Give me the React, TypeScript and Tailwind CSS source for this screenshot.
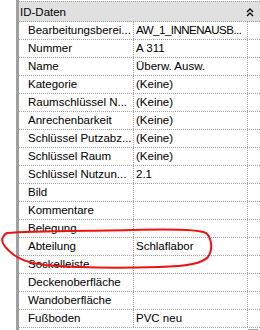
const rows: [string, string][] = [
  ["Bearbeitungsberei...", "AW_1_INNENAUSB..."],
  ["Nummer", "A 311"],
  ["Name", "Überw. Ausw."],
  ["Kategorie", "(Keine)"],
  ["Raumschlüssel N...", "(Keine)"],
  ["Anrechenbarkeit", "(Keine)"],
  ["Schlüssel Putzabz...", "(Keine)"],
  ["Schlüssel Raum", "(Keine)"],
  ["Schlüssel Nutzun...", "2.1"],
  ["Bild", ""],
  ["Kommentare", ""],
  ["Belegung", ""],
  ["Abteilung", "Schlaflabor"],
  ["Sockelleiste", ""],
  ["Deckenoberfläche", ""],
  ["Wandoberfläche", ""],
  ["Fußboden", "PVC neu"],
];

export default function App() {
  return (
    <div
      className="relative flex w-[260px] h-[330px] overflow-hidden bg-white text-black text-[11.5px]"
      style={{ fontFamily: '"Liberation Sans", Arial, sans-serif' }}
    >
      {/* left gutter + gray bar */}
      <div className="w-[16px] shrink-0" />
      <div className="w-[3px] shrink-0 bg-[#a0a0a0]" />

      <div className="flex flex-col w-[241px] pt-[1px]">
        {/* group header */}
        <div className="flex items-center h-[21px] bg-[#e0e0e0] border-t border-b border-dotted border-[#a0a0a0] pt-[2px]">
          <span className="flex-1 pl-[1px]">ID-Daten</span>
          <svg width="8" height="9" viewBox="0 0 8 9" className="mr-[6px] mb-[1px]">
            <path d="M1 4 L4 1 L7 4 M1 8 L4 5 L7 8" fill="none" stroke="#000" strokeWidth="1.3" />
          </svg>
        </div>

        {rows.map(([label, value], i) => (
          <div key={i} className="flex h-[18px] border-b border-dotted border-[#a0a0a0]">
            <div className="w-[115px] shrink-0 border-r border-dotted border-[#a0a0a0] pl-[9px] flex items-center whitespace-nowrap overflow-hidden">
              {label}
            </div>
            <div
              className={
                "w-[114px] shrink-0 border-r border-dotted border-[#a0a0a0] pl-[2px] flex items-center whitespace-nowrap overflow-hidden" +
                (i === 0 ? " tracking-[-0.5px]" : "")
              }
            >
              {value}
            </div>
            <div className="flex-1" />
          </div>
        ))}

        {/* scrollbar stub */}
        <div className="flex flex-1">
          <div className="w-[229px]" />
          <div className="w-[10px] h-[4px] mt-[1px] border border-[#a8a8a8] bg-[#f0f0f0]" />
        </div>
      </div>

      {/* hand-drawn red marker */}
      <svg className="absolute left-0 top-0 pointer-events-none" width="260" height="330">
        <path
          d="M7 233 C 30 231, 90 231, 133 230 C 170 229, 198 229, 206 233 C 212 238, 213 250, 208 257 C 202 264, 185 266, 160 267 C 130 268, 80 268, 45 265 C 25 262, 20 259, 14 255 C 6 249, 0 242, 3 237 C 4 235, 5 234, 7 233"
          fill="none"
          stroke="#ee1111"
          strokeWidth="2"
          strokeLinecap="round"
        />
      </svg>
    </div>
  );
}
